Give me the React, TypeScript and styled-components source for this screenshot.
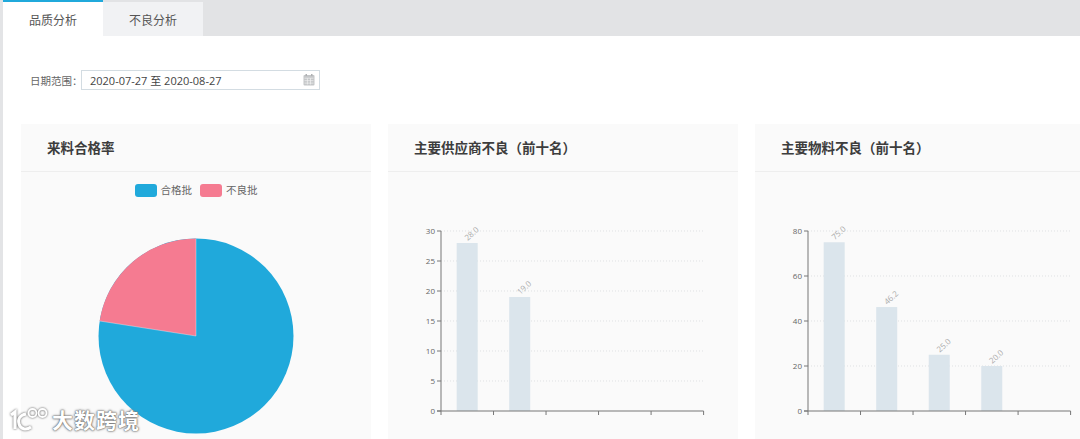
import React from 'react';
import styled, { createGlobalStyle } from 'styled-components';

const GlobalStyle = createGlobalStyle`
  html, body {
    margin: 0;
    padding: 0;
    height: 100%;
    background: #fff;
    overflow: hidden;
    font-family: 'Open Sans', 'Noto Sans CJK SC', sans-serif;
  }
`;

const Page = styled.div`
  position: relative;
  display: flex;
  width: 1080px;
  height: 439px;
  overflow: hidden;
`;

const SideStrip = styled.div`
  width: 3px;
  flex-shrink: 0;
  background: #e3e4e6;
`;

const Main = styled.div`
  flex: 1;
  min-width: 0;
  background: #fff;
`;

const TabBar = styled.div`
  display: flex;
  height: 36px;
  background: #e2e3e5;
`;

const Tab = styled.div<{ $active?: boolean }>`
  width: 100px;
  box-sizing: border-box;
  margin-top: ${(p) => (p.$active ? '0' : '2px')};
  padding-top: 3px;
  border-top: ${(p) => (p.$active ? '2px solid #20a9db' : 'none')};
  background: ${(p) => (p.$active ? '#fff' : '#f1f2f4')};
  color: #555;
  font-size: 12px;
  line-height: 31px;
  text-align: center;
`;

const FilterRow = styled.div`
  display: flex;
  align-items: center;
  height: 20px;
  margin: 34px 0 34px 27px;
`;

const FilterLabel = styled.span`
  width: 51px;
  flex-shrink: 0;
  font-size: 10.5px;
  color: #666;
  white-space: nowrap;
`;

const DateInput = styled.div`
  display: flex;
  align-items: center;
  justify-content: space-between;
  box-sizing: border-box;
  width: 239px;
  height: 20px;
  padding: 0 4px 0 8px;
  border: 1px solid #d3dce2;
  font-size: 11px;
  color: #444;
`;

const Cards = styled.div`
  display: flex;
  gap: 17px;
  padding-left: 18px;
`;

const Card = styled.section`
  flex-shrink: 0;
  width: 350px;
  height: 330px;
  background: #fafafa;
`;

const CardHeader = styled.h2`
  box-sizing: border-box;
  height: 48px;
  margin: 0;
  padding: 1px 0 0 26px;
  border-bottom: 1px solid #eeeeee;
  font-size: 13.5px;
  font-weight: 700;
  line-height: 47px;
  color: #3d3d3d;
`;

const Legend = styled.div`
  display: flex;
  justify-content: center;
  gap: 8px;
  padding-top: 11px;
`;

const LegendItem = styled.div`
  display: flex;
  align-items: center;
  gap: 4px;
  font-size: 10.5px;
  line-height: 14px;
  color: #666;
`;

const Swatch = styled.span<{ $color: string }>`
  width: 22px;
  height: 13px;
  border-radius: 3px;
  background: ${(p) => p.$color};
`;

const PieWrap = styled.div`
  display: flex;
  justify-content: center;
  padding-top: 41px;
`;

const ChartSvg = styled.svg`
  display: block;
  font-family: 'Open Sans', sans-serif;
`;

const Watermark = styled.div`
  position: absolute;
  left: 9px;
  top: 407px;
  display: flex;
  align-items: center;
  gap: 3px;
  color: #fff;
  font-size: 21px;
  font-weight: 700;
  line-height: 26px;
  letter-spacing: 1px;
  text-shadow: 0 0 2px #666, 0 0 1px #666, 0 0 3px #999;
`;

const AXIS_LEFT = 53;
const AXIS_RIGHT = 315.6;
const AXIS_BOTTOM = 239;
const AXIS_TOP = 59;

const BarChart: React.FC<{ values: number[]; max: number; step: number }> = ({ values, max, step }) => {
  const slot = (AXIS_RIGHT - AXIS_LEFT) / 5;
  const toY = (v: number) => AXIS_BOTTOM - (v / max) * (AXIS_BOTTOM - AXIS_TOP);
  const ticks: number[] = [];
  for (let v = 0; v <= max; v += step) ticks.push(v);

  return (
    <ChartSvg width={350} height={268}>
      {ticks.filter((t) => t > 0).map((t) => (
        <line key={t} x1={AXIS_LEFT} x2={AXIS_RIGHT} y1={toY(t)} y2={toY(t)} stroke="#dfe1e3" strokeDasharray="1 2" />
      ))}
      {values.map((v, i) => {
        const x = AXIS_LEFT + slot * i + 15.7;
        return (
          <g key={i}>
            <rect x={x} y={toY(v)} width={21} height={AXIS_BOTTOM - toY(v)} fill="#dbe5ec" />
            <text
              x={x + 11}
              y={toY(v) - 2}
              fontSize={8}
              fill="#aaa"
              transform={`rotate(-42 ${x + 11} ${toY(v) - 2})`}
            >
              {v.toFixed(1)}
            </text>
          </g>
        );
      })}
      <line x1={AXIS_LEFT} x2={AXIS_LEFT} y1={AXIS_TOP} y2={AXIS_BOTTOM} stroke="#777" />
      <line x1={AXIS_LEFT - 4} x2={AXIS_RIGHT} y1={AXIS_BOTTOM} y2={AXIS_BOTTOM} stroke="#777" />
      {ticks.map((t) => (
        <g key={t}>
          <line x1={AXIS_LEFT - 4} x2={AXIS_LEFT} y1={toY(t)} y2={toY(t)} stroke="#777" />
          <text x={AXIS_LEFT - 6} y={toY(t) + 3} fontSize={8} fill="#666" textAnchor="end">
            {t}
          </text>
        </g>
      ))}
      {[0, 1, 2, 3, 4, 5].map((i) => (
        <line
          key={i}
          x1={AXIS_LEFT + slot * i}
          x2={AXIS_LEFT + slot * i}
          y1={AXIS_BOTTOM}
          y2={AXIS_BOTTOM + 4}
          stroke="#777"
        />
      ))}
    </ChartSvg>
  );
};

const PieChart: React.FC = () => (
  <svg width={196} height={196} viewBox="-98 -98 196 196" style={{ display: 'block' }}>
    <circle r={97.5} fill="#20a9db" />
    <path d="M0 0 L-96.4 -15 A97.5 97.5 0 0 1 0 -97.5 Z" fill="#f57b91" />
    <path d="M0 0 L-96.4 -15 M0 0 L0 -97.5" stroke="#fff" strokeOpacity={0.5} strokeWidth={0.7} />
  </svg>
);

const CalendarIcon: React.FC = () => (
  <svg width={12} height={12} viewBox="0 0 12 12">
    <rect x={0.5} y={1} width={11} height={10.5} rx={1} fill="#c4c6c8" />
    <rect x={2.5} y={0} width={1.5} height={2} fill="#aeb0b2" />
    <rect x={8} y={0} width={1.5} height={2} fill="#aeb0b2" />
    <path d="M1.5 4.2H10.5M1.5 6.7H10.5M1.5 9.1H10.5M4.4 4.2V10.5M7.5 4.2V10.5" stroke="#f2f2f2" strokeWidth={0.7} />
  </svg>
);

const WatermarkLogo: React.FC = () => (
  <svg width={40} height={26} viewBox="0 0 40 26" fill="none" stroke="#fff" style={{ filter: 'drop-shadow(0 0 1px #555)' }}>
    <path d="M2 8 L6 5 V22" strokeWidth={3.2} />
    <path d="M17 7 C11 8 8.5 12 10 17 C11.5 22 17 23.5 22 20" strokeWidth={3} />
    <circle cx={23.5} cy={6} r={4} strokeWidth={1.8} />
    <circle cx={33.5} cy={6} r={4} strokeWidth={1.8} />
  </svg>
);

export default function App() {
  return (
    <Page>
      <GlobalStyle />
      <SideStrip />
      <Main>
        <TabBar>
          <Tab $active>品质分析</Tab>
          <Tab>不良分析</Tab>
        </TabBar>
        <FilterRow>
          <FilterLabel>日期范围：</FilterLabel>
          <DateInput>
            <span>2020-07-27 至 2020-08-27</span>
            <CalendarIcon />
          </DateInput>
        </FilterRow>
        <Cards>
          <Card>
            <CardHeader>来料合格率</CardHeader>
            <Legend>
              <LegendItem><Swatch $color="#20a9db" />合格批</LegendItem>
              <LegendItem><Swatch $color="#f57b91" />不良批</LegendItem>
            </Legend>
            <PieWrap>
              <PieChart />
            </PieWrap>
          </Card>
          <Card>
            <CardHeader>主要供应商不良（前十名）</CardHeader>
            <BarChart values={[28, 19]} max={30} step={5} />
          </Card>
          <Card>
            <CardHeader>主要物料不良（前十名）</CardHeader>
            <BarChart values={[75, 46.2, 25, 20]} max={80} step={20} />
          </Card>
        </Cards>
      </Main>
      <Watermark>
        <WatermarkLogo />
        <span>大数跨境</span>
      </Watermark>
    </Page>
  );
}
